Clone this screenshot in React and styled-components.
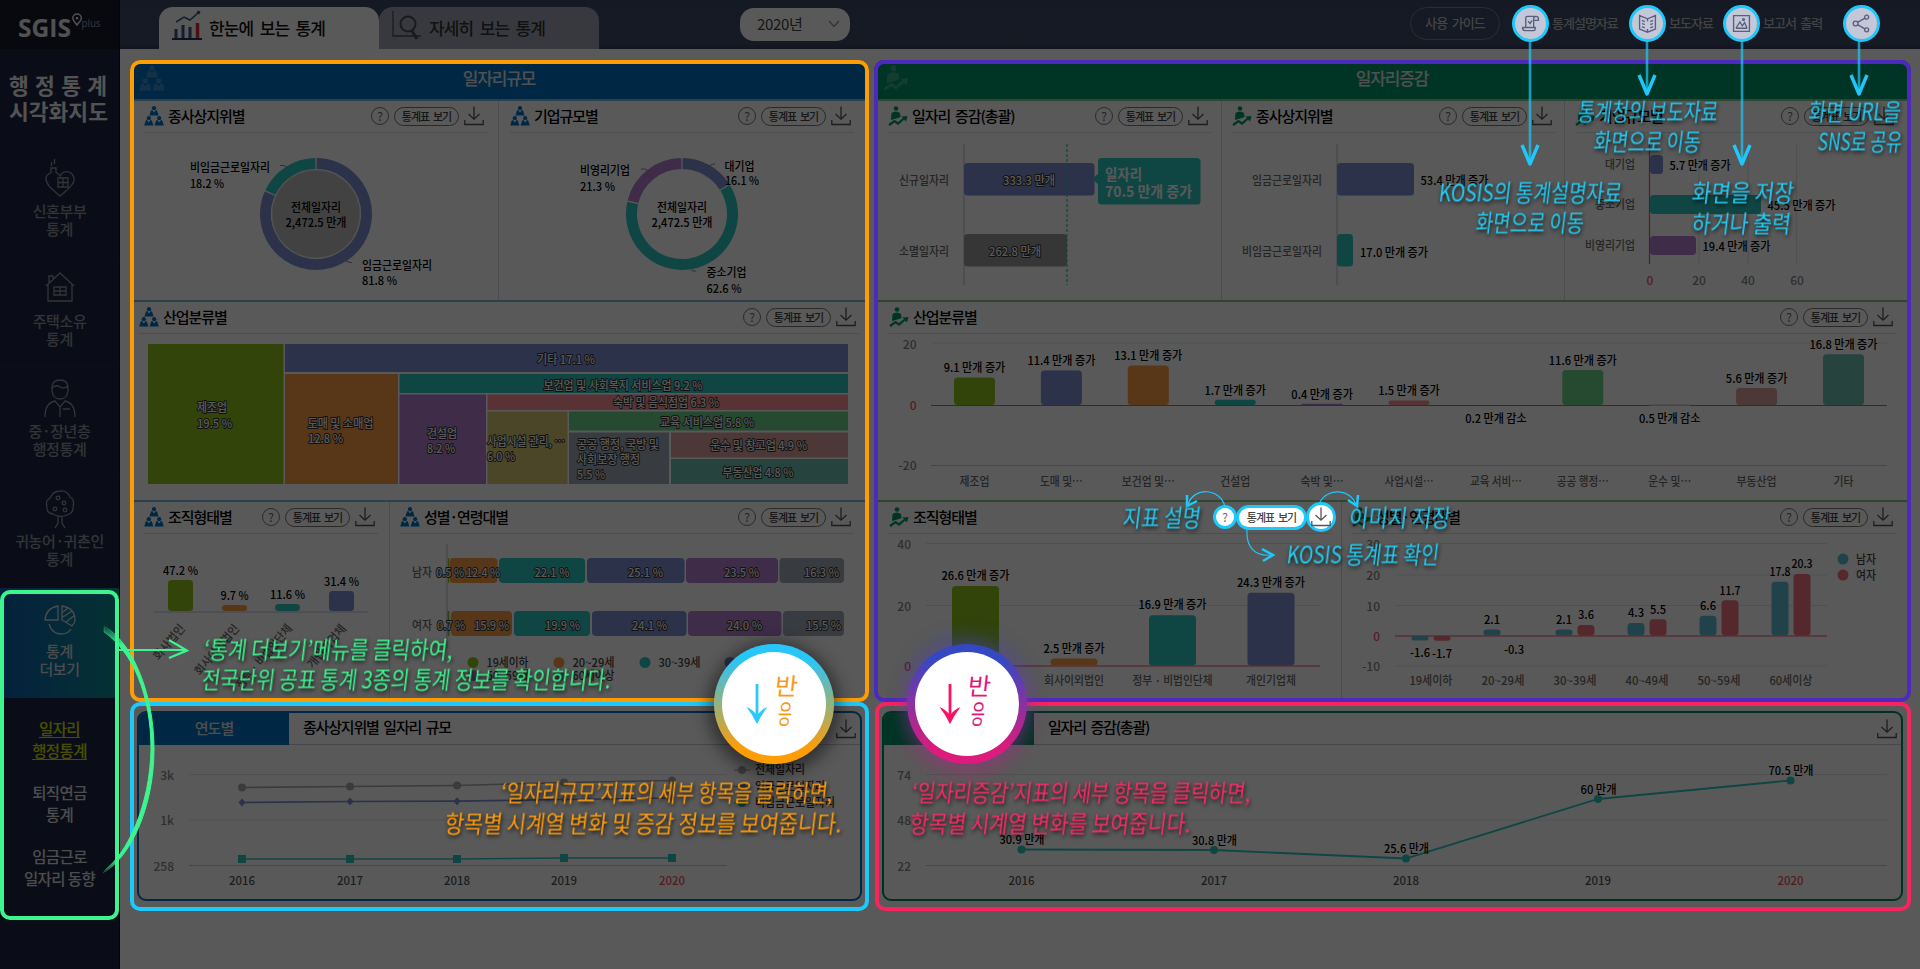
import React from "react";
import styled, { createGlobalStyle, css } from "styled-components";

const FONT = '"Noto Sans CJK KR", "Noto Sans", sans-serif';
const C = {
  lime: "#91c41f", orange: "#f99d45", teal: "#2bc8c2", blue: "#7b8fd3", purple: "#b47ed0",
  pink: "#ff8f9a", khaki: "#dac873", green: "#6dd389", gray: "#a0aab4", brown: "#d9a19b",
  sea: "#6dbfb0", cyanBar: "#63bcd8", redBar: "#f07280", red: "#f05060",
  navy: "#0072c6", forest: "#00986a", grid: "#e4e6f0", axis: "#c4c8dc", label: "#6a6a6a", tick: "#868686",
  cyan: "#1fc8fa",
};

const Global = createGlobalStyle`
  * { box-sizing: border-box; }
  body { margin: 0; font-family: ${FONT}; background: #595959; overflow: hidden; }
  svg { display: block; overflow: visible; }
  svg text { font-family: ${FONT}; }
`;

/* ---------- page frame ---------- */
const Page = styled.div`
  position: relative;
  display: grid;
  grid-template-columns: 120px 1800px;
  width: 1920px;
  height: 969px;
  background: #fff;
  overflow: hidden;
`;
const Dim = styled.div`
  position: absolute;
  inset: 0;
  background: rgba(0, 0, 0, 0.65);
  z-index: 1;
`;
const Sidebar = styled.aside`
  display: flex;
  flex-direction: column;
  background: #1d2742;
  border-right: 1px solid #0b0f1c;
  color: #fff;
  text-align: center;
`;
const LogoBox = styled.div`
  height: 49px;
  padding: 14px 0 0 18px;
  background: #141a2b;
`;
const ServiceName = styled.h1`
  height: 99px;
  margin: 0;
  padding-top: 23px;
  font-size: 21.5px;
  line-height: 26px;
  font-weight: 700;
  color: #eee;
  div { display: flex; justify-content: space-between; padding: 0 12px 0 9px; }
`;
const NavItem = styled.div`
  height: 110px;
  padding-top: 11px;
  font-size: 15px;
  font-weight: 500;
  line-height: 18px;
  letter-spacing: -0.4px;
  white-space: pre-line;
  color: ${(p) => (p.$on ? "#d4dade" : "#8f949e")};
  background: ${(p) => (p.$on ? "linear-gradient(90deg,#0c5fae,#0e8f94)" : "none")};
  border-bottom: ${(p) => (p.$line ? "1px solid #222c48" : "0")};
  svg { margin: 0 auto 3px; stroke: currentColor; fill: none; }
`;
const SubMenu = styled.div`
  flex: 1;
  padding-top: 19px;
`;
const SubItem = styled.div`
  height: 64px;
  font-size: 15.5px;
  font-weight: 500;
  line-height: 22px;
  letter-spacing: -0.6px;
  white-space: pre-line;
  color: ${(p) => (p.$on ? "#d8e000" : "#dcdcdc")};
  text-decoration: ${(p) => (p.$on ? "underline" : "none")};
  text-underline-offset: 2px;
`;
const Main = styled.main`
  display: flex;
  flex-direction: column;
`;

/* ---------- header ---------- */
const Header = styled.header`
  display: flex;
  height: 49px;
  padding-left: 39px;
  background: linear-gradient(#3e4966, #3e4a66 90%, #363f56);
`;
const Tab = styled.div`
  display: flex;
  align-items: center;
  gap: 7px;
  width: 220px;
  height: 42px;
  margin-top: 7px;
  padding: 0 0 2px 13px;
  border-radius: 14px 14px 0 0;
  background: ${(p) => (p.$on ? "#fff" : "#a2a4b4")};
  color: ${(p) => (p.$on ? "#111" : "#333")};
  font-size: 17px;
  font-weight: 500;
  letter-spacing: -0.9px;
  word-spacing: 3.5px;
`;
const Select = styled.div`
  display: flex;
  align-items: center;
  justify-content: space-between;
  width: 110px;
  height: 33px;
  margin: 8px 0 0 141px;
  padding: 0 10px 2px 17px;
  border-radius: 14px;
  background: #fff;
  color: #444;
  font-size: 15px;
  letter-spacing: -0.3px;
`;
const GuideButton = styled.div`
  width: 90px;
  height: 33px;
  margin: 7px 0 0 560px;
  border: 1px solid #77809a;
  border-radius: 17px;
  color: #c0c0c0;
  font-size: 13px;
  font-weight: 500;
  line-height: 30px;
  letter-spacing: -0.9px;
  word-spacing: 2.5px;
  text-align: center;
`;
const RoundIcon = styled.div`
  position: relative;
  z-index: 2;
  width: 37px;
  height: 37px;
  margin: 5px 0 0 ${(p) => p.$gap || 12}px;
  padding: 6px;
  border: 3px solid ${C.cyan};
  border-radius: 50%;
  background: #c3c7d8;
  svg { width: 19px; height: 19px; stroke: #59607c; fill: none; stroke-width: 1.7; }
`;
const HeadLink = styled.div`
  width: ${(p) => p.$w}px;
  margin-left: 3px;
  color: #bdbdbd;
  font-size: 13px;
  font-weight: 500;
  line-height: 45px;
  letter-spacing: -1px;
  word-spacing: 2.5px;
  white-space: nowrap;
`;

/* ---------- boards ---------- */
const Content = styled.div`
  display: grid;
  grid-template-columns: 739px 1037px;
  column-gap: 5px;
  padding: 11px 0 0 10px;
`;
const Column = styled.section`
  display: flex;
  flex-direction: column;
`;
const Board = styled.div`
  border-radius: 10px 10px 0 0;
`;
const BoardTitle = styled.h2`
  display: flex;
  align-items: center;
  height: 41px;
  margin: 0;
  padding: 0 0 4px 9px;
  border-bottom: 2px solid ${(p) => p.$edge};
  border-radius: 10px 10px 0 0;
  background: ${(p) => p.$color};
  color: #e4e4e4;
  font-size: 17px;
  font-weight: 500;
  letter-spacing: -1.1px;
  svg { opacity: 0.22; }
  span { flex: 1; padding-right: 36px; text-align: center; }
`;
const Row = styled.div`
  display: flex;
  height: ${(p) => p.$h}px;
  border-bottom: ${(p) => (p.$edge ? `2px solid ${p.$edge}` : "0")};
`;
const CardBox = styled.article`
  width: ${(p) => p.$w}px;
  flex: none;
  border-right: ${(p) => (p.$divide ? "1px solid #d9dae2" : "0")};
`;
const CardHead = styled.div`
  display: flex;
  align-items: center;
  height: 32px;
  margin: 0 ${(p) => p.$r}px 0 ${(p) => p.$l}px;
  padding: 0 3px 1px 0;
  border-bottom: 1px solid #dcdee6;
`;
const CardTitle = styled.h3`
  flex: 1;
  margin: 0 0 1px 4px;
  color: #000;
  font-size: 15px;
  font-weight: 500;
  letter-spacing: -1.05px;
  word-spacing: 2.5px;
  white-space: nowrap;
`;
const Tools = styled.div`
  display: flex;
  align-items: center;
  gap: 5px;
`;
const lit = css`
  position: relative;
  z-index: 2;
  background: #fff;
  border-color: transparent;
  box-shadow: 0 0 0 3px ${C.cyan};
`;
const HelpButton = styled.div`
  width: 18px;
  height: 18px;
  border: 1px solid #777;
  border-radius: 50%;
  color: #666;
  font-size: 12px;
  line-height: 15px;
  text-align: center;
  ${(p) => p.$lit && lit}
`;
const TableButton = styled.div`
  width: 65px;
  height: 19px;
  border: 1px solid #777;
  border-radius: 10px;
  color: #444;
  font-size: 11px;
  font-weight: 500;
  line-height: 16px;
  letter-spacing: -0.9px;
  word-spacing: 2px;
  text-align: center;
  ${(p) => p.$lit && lit}
`;
const SaveButton = styled.div`
  width: 20px;
  height: 20px;
  border-radius: 50%;
  svg { width: 20px; height: 20px; stroke: #555; fill: none; }
  ${(p) => p.$lit && css`
    ${lit}
    width: 24px;
    height: 24px;
    margin: 0 -5px 0 0;
    padding: 2px;
  `}
`;
const Trend = styled.div`
  height: 190px;
  margin: 9px ${(p) => p.$r}px 0 ${(p) => p.$l}px;
  border: 2px solid ${(p) => p.$color};
  border-radius: 9px;
  overflow: hidden;
`;
const TrendHead = styled.div`
  display: flex;
  align-items: center;
  height: 32px;
  padding-right: 4px;
  border-bottom: 1px solid #c5cbdc;
`;
const TrendTag = styled.div`
  width: 150px;
  height: 32px;
  background: ${(p) => p.$color};
  color: #e0e0e0;
  font-size: 15px;
  font-weight: 500;
  line-height: 29px;
  letter-spacing: -1px;
  text-align: center;
`;
const TrendTitle = styled.div`
  flex: 1;
  padding: 0 0 4px 14px;
  color: #000;
  font-size: 15px;
  font-weight: 500;
  letter-spacing: -1.2px;
  word-spacing: 2.5px;
`;

/* ---------- tutorial layer ---------- */
const Frame = styled.div`
  position: absolute;
  z-index: 3;
  left: ${(p) => p.$x}px;
  top: ${(p) => p.$y}px;
  width: ${(p) => p.$w}px;
  height: ${(p) => p.$h}px;
  border: 4px solid ${(p) => p.$c};
  border-radius: 10px;
`;
const Notes = styled.svg`
  position: absolute;
  inset: 0;
  z-index: 4;
  .note { filter: drop-shadow(1px 2px 2px rgba(0, 0, 0, 0.85)); }
`;
const BadgeBox = styled.div`
  position: absolute;
  z-index: 5;
  left: ${(p) => p.$x}px;
  top: 644px;
  width: 120px;
  height: 120px;
  padding: 8px;
  border-radius: 50%;
  background: linear-gradient(${(p) => p.$from} 12%, ${(p) => p.$to} 88%);
  box-shadow: ${(p) => p.$glow};
`;
const BadgeFace = styled.div`
  height: 104px;
  border-radius: 50%;
  background: #fff;
`;

/* ---------- icons ---------- */
const Logo = () => (
  <svg width="84" height="30" viewBox="0 0 84 30">
    <text x="0" y="22.500" fontSize="25" fontWeight="700" fill="#e8e8e8" textLength="53" lengthAdjust="spacingAndGlyphs" style={{ fontFamily: '"Open Sans", sans-serif' }}>SGIS</text>
    <path d="M59 11 C57 8 54.8 6.500 54.800 4.200 a4.300 4.300 0 0 1 8.600 0 C63.400 6.500 61 8 59 11Z" fill="none" stroke="#e8e8e8" strokeWidth="1.500" />
    <circle cx="59" cy="4.200" r="1.300" fill="#e8e8e8" />
    <text x="63.500" y="13" fontSize="10.500" fill="#9ba3b5" textLength="19" lengthAdjust="spacingAndGlyphs" style={{ fontFamily: '"Open Sans", sans-serif' }}>plus</text>
  </svg>
);
const ChartIcon = () => (
  <svg width="30" height="26" viewBox="0 0 30 26" fill="none">
    <path d="M0 25H30" stroke="#26345f" strokeWidth="2" />
    <path d="M4 24V15M11 24V11M18 24V13" stroke="#3a5090" strokeWidth="3" />
    <path d="M25.500 24V9" stroke="#dd2b3a" strokeWidth="3.500" />
    <path d="M4 8L12 3L18 6L26 -1" stroke="#3a5090" strokeWidth="1.500" />
    <circle cx="26.500" cy="-1.500" r="1.800" fill="#3a5090" />
  </svg>
);
const SearchChartIcon = () => (
  <svg width="30" height="26" viewBox="0 0 30 26" fill="none" stroke="#4a4c55">
    <path d="M1 -3V22H29" strokeWidth="1.300" />
    <circle cx="16" cy="10" r="7.500" strokeWidth="2" />
    <path d="M20 17L25 25" strokeWidth="3" />
  </svg>
);
const Figure = ({ x, y }) => (
  <g transform={`translate(${x} ${y})`}>
    <circle cx="0" cy="-2.800" r="2.100" />
    <path d="M-4.600 4.600L-3.200 0Q-2.800 -0.900 -1.800 -0.900L0 1.600L1.800 -0.900Q2.800 -0.900 3.200 0L4.600 4.600Z" />
  </g>
);
const PeopleIcon = ({ size = 20, fill = C.navy }) => (
  <svg width={size} height={size} viewBox="0 0 20 20" fill={fill}>
    <Figure x={10} y={5} />
    <Figure x={4.800} y={15} />
    <Figure x={15.200} y={15} />
  </svg>
);
const GrowthIcon = ({ size = 20, fill = C.forest }) => (
  <svg width={size} height={size} viewBox="0 0 20 20" fill={fill}>
    <circle cx="8" cy="2.500" r="2.300" />
    <path d="M3.500 7Q8 4 12 7L12.500 11L10 12L3 14Z" />
    <path d="M1 19L6.500 15L10 17.500L16.500 12" fill="none" stroke={fill} strokeWidth="2.200" />
    <path d="M13.500 10.500L19.500 10L18 15.500Z" />
  </svg>
);
const DownloadIcon = () => (
  <svg viewBox="0 0 20 20" strokeWidth="1.300">
    <path d="M10 0.500V13M4.500 8L10 13.200L15.500 8M0.800 14V18.500H19.200V14" />
  </svg>
);
const NavIcons = {
  heart: <path d="M16 37C9 31 2 26 2 19.500C2 17 4 15 7 13.500V9H12V13.500C13 14 15 15 16 17C18 13 22 12 25 13C30 15 32 21 28 25.500C25 30 20 33.500 16 37ZM7.500 7V3M10.500 5V0M14 19H24V28H14ZM19 19V28M14 23.500H24" />,
  house: <path d="M2 17L16 4L30 17M4 15.500V32H28V15.500M5 14V7H9V11M10 18H22V26H10ZM16 18V26M10 22H22" />,
  man: <path d="M8 9Q8 1 16 1Q24 1 24 9V12Q23 20 16 20Q9 20 8 12ZM8 9Q12 5 16 8Q21 10 24 7M1 38Q1 24 11 22L16 28L21 22Q31 24 31 38M16 28V38M19 30H26" />,
  tree: <g><path d="M9 25Q2 24 3 17Q1 12 6 9Q9 2 16 2Q23 1 26 8Q31 11 29 17Q30 24 23 26Q16 29 9 25ZM14 27V34L11 39M18 27V34L21 39" /><circle cx="14" cy="9" r="1.800" /><circle cx="20" cy="14" r="1.800" /><circle cx="11" cy="20" r="1.800" /><circle cx="21" cy="21" r="1.800" /></g>,
  pie: <path transform="translate(0 6)" d="M14 15H1Q2 3 14 1ZM18 1Q31 3 31 15Q31 18 28 21L18 15ZM19 7L24 3M19 12L28 6M22 17L31 10M5 19Q8 29 17 29Q24 29 27 24" />,
};
const NavSvg = ({ name }) => (
  <svg width="32" height="40" viewBox="0 0 32 40" strokeWidth="1.300">{NavIcons[name]}</svg>
);

/* ---------- chart parts ---------- */
const T = ({ x, y, w, a = "start", s = 12, fill = "#000", out, children, rot, weight = 500, ...rest }) => (
  <text
    x={x} y={y + s * 0.36} fontSize={s} fill={fill} textAnchor={a} fontWeight={weight}
    textLength={w} lengthAdjust="spacingAndGlyphs"
    transform={rot ? `rotate(${rot} ${x} ${y})` : undefined}
    stroke={out ? "#333" : undefined} strokeWidth={out ? 2 : undefined} paintOrder="stroke" strokeLinejoin="round"
    {...rest}
  >{children}</text>
);
const White = (p) => <T fill="#fff" out {...p} />;
const Bar = ({ x, y, w, h, c, r = 3.500 }) => <rect x={x} y={y} width={w} height={h} rx={Math.min(r, h / 2)} fill={c} />;
const HLine = ({ x1, x2, y, c = C.grid }) => <line x1={x1} x2={x2} y1={y} y2={y} stroke={c} strokeWidth="1.200" />;
const VLine = ({ x, y1, y2, c = C.axis, ...r }) => <line x1={x} x2={x} y1={y1} y2={y2} stroke={c} strokeWidth="1.200" {...r} />;
const Plot = ({ x, y, w, h, children }) => (
  <svg width={w} height={h} viewBox={`${x} ${y} ${w} ${h}`}>{children}</svg>
);
function arc(cx, cy, r, from, to) {
  const p = (t) => [cx + r * Math.sin(t * 2 * Math.PI), cy - r * Math.cos(t * 2 * Math.PI)];
  const [x1, y1] = p(from);
  const [x2, y2] = p(to);
  return `M${x1} ${y1}A${r} ${r} 0 ${to - from > 0.5 ? 1 : 0} 1 ${x2} ${y2}`;
}
function Donut({ cx, cy, parts, filled }) {
  let at = 0;
  return (
    <g>
      {filled && <circle cx={cx} cy={cy} r="44" fill="#bdbdbd" stroke="#ddd" />}
      {parts.map(([v, c]) => {
        const d = arc(cx, cy, 50.5, at + 0.002, at + v / 100 - 0.002);
        at += v / 100;
        return <path key={c} d={d} fill="none" stroke={c} strokeWidth="11" />;
      })}
      <T x={cx} y={cy - 6} w={50} a="middle">전체일자리</T>
      <T x={cx} y={cy + 9} w={61} a="middle">2,472.5 만개</T>
    </g>
  );
}

/* ---------- cards ---------- */
function Card({ w, l, r, title, green, divide, lit: on, children }) {
  return (
    <CardBox $w={w} $divide={divide}>
      <CardHead $l={l} $r={r}>
        {green ? <GrowthIcon /> : <PeopleIcon />}
        <CardTitle>{title}</CardTitle>
        <Tools>
          <HelpButton $lit={on}>?</HelpButton>
          <TableButton $lit={on}>통계표 보기</TableButton>
          <SaveButton $lit={on}><DownloadIcon /></SaveButton>
        </Tools>
      </CardHead>
      {children}
    </CardBox>
  );
}

const tree = [
  [148, 344, 135.5, 140, C.lime, [["제조업", 197, 408, 30], ["19.5 %", 197, 423.500, 35]]],
  [285, 344, 563, 28, C.blue, [["기타 17.1 %", 537, 360, 58]]],
  [285, 374, 113, 110, C.orange, [["도매 및 소매업", 307.500, 424, 66], ["12.8 %", 308, 438.500, 35]]],
  [399.500, 374, 448.500, 19, C.teal, [["보건업 및 사회복지 서비스업 9.2 %", 543.500, 385.500, 159]]],
  [399.500, 394.500, 86.500, 89.500, C.purple, [["건설업", 427, 433.500, 30], ["8.2 %", 427, 448.500, 28]]],
  [487.500, 394.500, 360.500, 15.500, C.pink, [["숙박 및 음식점업 6.3 %", 613, 403, 106]]],
  [487.500, 411.500, 80, 72.500, C.khaki, [["사업시설 관리, …", 487, 442, 78], ["6.0 %", 487, 456.500, 28]]],
  [569, 411.500, 279, 19, C.green, [["교육 서비스업 5.8 %", 660, 422.500, 94]]],
  [569, 432.500, 100, 51.500, C.gray, [["공공 행정, 국방 및", 577, 445, 82], ["사회보장 행정", 577, 459.500, 63], ["5.5 %", 577, 475, 28]]],
  [671, 432.500, 177, 25, C.brown, [["운수 및 창고업 4.9 %", 710, 446, 97]]],
  [671, 459, 177, 25, C.sea, [["부동산업 4.8 %", 722.500, 472.500, 71]]],
];
const stacked = [
  { y: 558, name: "남자", segs: [[448, 449, C.lime, "0.5 %", 436, 28], [449.500, 497.500, C.orange, "12.4 %", 466, 34], [499, 585, C.teal, "22.1 %", 534.500, 35], [587, 684.500, C.blue, "25.1 %", 628, 35], [686, 778, C.purple, "23.5 %", 724, 35], [779.500, 844, C.gray, "16.3 %", 804, 35]] },
  { y: 611, name: "여자", segs: [[447.500, 449.500, C.lime, "0.7 %", 437, 28], [451, 512, C.orange, "15.9 %", 474, 35], [514, 590, C.teal, "19.9 %", 545, 35], [592, 686.500, C.blue, "24.1 %", 632, 35], [688, 781.500, C.purple, "24.0 %", 727, 35], [783, 844, C.gray, "15.5 %", 806, 35]] },
];
const orgShare = [
  [180.500, 580, C.lime, "47.2 %", "회사법인", 42],
  [234.500, 605, C.orange, "9.7 %", "회사이외법인", 62],
  [287.500, 604, C.teal, "11.6 %", "정부 · 비법인단체", 80],
  [341.500, 591, C.blue, "31.4 %", "개인기업체", 53],
];
const industry = [
  ["제조업", 9.1, C.lime, 30], ["도매 및…", 11.4, C.blue, 43], ["보건업 및…", 13.1, C.orange, 53], ["건설업", 1.7, C.teal, 30],
  ["숙박 및…", 0.4, C.purple, 43], ["사업시설…", 1.5, C.pink, 49], ["교육 서비…", -0.2, null, 52], ["공공 행정…", 11.6, C.green, 52],
  ["운수 및…", -0.5, C.gray, 43], ["부동산업", 5.6, C.brown, 40], ["기타", 16.8, C.sea, 20],
];
const orgChange = [["회사법인", 26.6, C.lime, 40], ["회사이외법인", 2.5, C.orange, 60], ["정부 · 비법인단체", 16.9, C.teal, 80], ["개인기업체", 24.3, C.blue, 50]];
const ages = [["19세이하", -1.6, -1.7], ["20~29세", 2.1, -0.3], ["30~39세", 2.1, 3.6], ["40~49세", 4.3, 5.5], ["50~59세", 6.6, 11.7], ["60세이상", 17.8, 20.3]];
const years = ["2016", "2017", "2018", "2019", "2020"];

function LeftBoard() {
  return (
    <Board>
      <BoardTitle $color="#0072c6" $edge="#7fb9e0"><PeopleIcon size={26} fill="#fff" /><span>일자리규모</span></BoardTitle>
      <Row $h={201} $edge="#7fb9e0">
        <Card w={369} l={14} r={11} title="종사상지위별" divide>
          <Plot x={130} y={133} w={368} h={166}>
            <Donut cx={316} cy={214} filled parts={[[81.8, C.blue], [18.2, C.teal]]} />
            <path d="M280 165.500H284L288 168M346 261L350 262.500H352" fill="none" stroke="#888" />
            <T x={190} y={168} w={80}>비임금근로일자리</T><T x={190} y={183.500} w={34}>18.2 %</T>
            <T x={362} y={265.500} w={70}>임금근로일자리</T><T x={362} y={281} w={35}>81.8 %</T>
          </Plot>
        </Card>
        <Card w={370} l={11} r={15} title="기업규모별">
          <Plot x={499} y={133} w={370} h={166}>
            <Donut cx={682} cy={214} parts={[[16.1, C.blue], [62.6, C.teal], [21.3, C.purple]]} />
            <path d="M641 169H645L650 172M709 166L713 164H715M691 270L693 271H696" fill="none" stroke="#888" />
            <T x={580} y={170.500} w={50}>비영리기업</T><T x={580} y={186.500} w={35}>21.3 %</T>
            <T x={724.500} y={166.500} w={30}>대기업</T><T x={725} y={181} w={34}>16.1 %</T>
            <T x={706.500} y={273} w={40}>중소기업</T><T x={706.500} y={288.500} w={35}>62.6 %</T>
          </Plot>
        </Card>
      </Row>
      <Row $h={200} $edge="#7fb9e0">
        <Card w={739} l={9} r={10} title="산업분류별">
          <Plot x={130} y={334} w={739} h={166}>
            {tree.map(([x, y, w, h, c, lines]) => (
              <g key={c}>
                <rect x={x} y={y} width={w} height={h} fill={c} />
                {lines.map(([t, tx, ty, tw]) => <White key={t} x={tx} y={ty} w={tw}>{t}</White>)}
              </g>
            ))}
          </Plot>
        </Card>
      </Row>
      <Row $h={200}>
        <Card w={260} l={14} r={11} title="조직형태별" divide>
          <Plot x={130} y={534} w={259} h={168}>
            <HLine x1={154} x2={368} y={612} c={C.axis} />
            {orgShare.map(([cx, top, c, v, name, w]) => (
              <g key={name}>
                <Bar x={cx - 12.500} y={top} w={25} h={611 - top} c={c} />
                <T x={cx} y={top - 9.500} w={v.length > 5 ? 35 : 28} a="middle">{v}</T>
                <T x={cx + 2} y={626} w={w} a="end" rot={-50} fill={C.label}>{name}</T>
              </g>
            ))}
          </Plot>
        </Card>
        <Card w={479} l={10} r={15} title="성별·연령대별">
          <Plot x={390} y={534} w={479} h={168}>
            <VLine x={447} y1={544} y2={649} />
            {stacked.map((row) => (
              <g key={row.name}>
                <T x={412} y={row.y + 15} w={20} fill={C.label}>{row.name}</T>
                {row.segs.map(([a, b, c]) => <Bar key={c} x={a} y={row.y} w={b - a} h={25} c={c} r={b - a < 4 ? 0 : 4} />)}
                {row.segs.map(([, , c, t, tx, tw]) => <White key={c} x={tx} y={row.y + 15} w={tw}>{t}</White>)}
              </g>
            ))}
            {[[473, 662.500, C.lime, "19세이하"], [559, 662.500, C.orange, "20~29세"], [645, 662.500, C.teal, "30~39세"], [730, 662.500, C.blue, "40~49세"], [473, 675.500, C.purple, "50~59세"], [559, 675.500, C.gray, "60세이상"]].map(([x, y, c, t]) => (
              <g key={t}><circle cx={x} cy={y} r="5.500" fill={c} /><T x={x + 13.500} y={y} w={42} fill="#444">{t}</T></g>
            ))}
          </Plot>
        </Card>
      </Row>
    </Board>
  );
}

const edgeG = "#86c98f";
function RightBoard() {
  return (
    <Board>
      <BoardTitle $color={C.forest} $edge={edgeG}><GrowthIcon size={26} fill="#fff" /><span>일자리증감</span></BoardTitle>
      <Row $h={201} $edge={edgeG}>
        <Card w={348} l={14} r={10} title="일자리 증감(총괄)" green divide>
          <Plot x={874} y={133} w={347} h={166}>
            <VLine x={964} y1={144} y2={285} />
            <Bar x={964} y={163} w={130.500} h={32.500} c={C.blue} />
            <Bar x={964} y={234} w={103} h={32.500} c="#9a9a9a" />
            <VLine x={1067} y1={144} y2={285} c="#2bc0a8" strokeDasharray="3 2" />
            <path d="M1092 179L1099 173V185Z" fill={C.teal} />
            <Bar x={1098} y={158} w={102.500} h={46.500} c={C.teal} />
            <White x={1003} y={181} w={52}>333.3 만개</White>
            <White x={989} y={252} w={52}>262.8 만개</White>
            <T x={899} y={180.500} w={50} fill={C.label}>신규일자리</T>
            <T x={899} y={251.500} w={50} fill={C.label}>소멸일자리</T>
            <T x={1105} y={174.500} w={37} s={14.5} fill="#fff" weight={700}>일자리</T>
            <T x={1105} y={192} w={87} s={14.5} fill="#fff" weight={700}>70.5 만개 증가</T>
          </Plot>
        </Card>
        <Card w={343} l={10} r={9} title="종사상지위별" green divide>
          <Plot x={1222} y={133} w={342} h={166}>
            <VLine x={1337} y1={144} y2={285} />
            <Bar x={1337} y={163} w={77} h={32.500} c={C.blue} />
            <Bar x={1337} y={234} w={16} h={32.500} c={C.teal} />
            <T x={1252} y={180.500} w={70} fill={C.label}>임금근로일자리</T>
            <T x={1242} y={251.500} w={80} fill={C.label}>비임금근로일자리</T>
            <T x={1420.500} y={181} w={68}>53.4 만개 증가</T>
            <T x={1360} y={252.500} w={68}>17.0 만개 증가</T>
          </Plot>
        </Card>
        <Card w={346} l={10} r={14} title="기업규모별" green>
          <Plot x={1565} y={133} w={346} h={166}>
            {[1699, 1748, 1796.500].map((x) => <VLine key={x} x={x} y1={144} y2={264} c={C.grid} />)}
            <VLine x={1649.500} y1={144} y2={264} c={C.red} />
            {[[155, 13, C.blue, "5.7 만개 증가", 61, "대기업", 30], [195, 111, C.teal, "45.5 만개 증가", 68, "중소기업", 40], [236, 46, C.purple, "19.4 만개 증가", 68, "비영리기업", 50]].map(([y, w, c, v, vw, n, nw]) => (
              <g key={n}>
                <Bar x={1650} y={y} w={w} h={19} c={c} />
                <T x={1656.500 + w} y={y + 11} w={vw}>{v}</T>
                <T x={1635} y={y + 10} w={nw} a="end" fill={C.label}>{n}</T>
              </g>
            ))}
            {["0", "20", "40", "60"].map((t, i) => <T key={t} x={1650 + i * 49} y={280.500} a="middle" fill={i ? C.tick : C.red}>{t}</T>)}
          </Plot>
        </Card>
      </Row>
      <Row $h={200} $edge={edgeG}>
        <Card w={1037} l={15} r={15} title="산업분류별" green>
          <Plot x={874} y={334} w={1037} h={166}>
            <HLine x1={931} x2={1887} y={343} /><HLine x1={931} x2={1887} y={465.500} c={C.axis} />
            <HLine x1={931} x2={1887} y={405.500} c={C.red} />
            <T x={916.500} y={344.500} a="end" fill={C.tick}>20</T>
            <T x={916.500} y={406} a="end" fill={C.red}>0</T>
            <T x={916.500} y={466} a="end" fill={C.tick}>-20</T>
            {industry.map(([n, v, c, w], i) => {
              const cx = 974.500 + i * 86.900;
              const h = Math.max(1.200, Math.abs(v) * 3.020);
              const text = `${Math.abs(v).toFixed(1)} 만개 ${v > 0 ? "증가" : "감소"}`;
              return (
                <g key={n}>
                  {c && v > 0 && <Bar x={cx - 20.500} y={405 - h} w={41} h={h} c={c} />}
                  {c && v < 0 && <rect x={cx - 20.500} y={404.500} width={41} height={1.500} fill="#d8bcc2" />}
                  <T x={cx} y={v > 0 ? 395.500 - h : 419} w={Math.abs(v) >= 10 ? 68 : 61.500} a="middle">{text}</T>
                  <T x={cx} y={481.500} w={w} a="middle" fill={C.label}>{n}</T>
                </g>
              );
            })}
          </Plot>
        </Card>
      </Row>
      <Row $h={200}>
        <Card w={468} l={15} r={10} title="조직형태별" green divide lit>
          <Plot x={874} y={534} w={467} h={168}>
            <HLine x1={926} x2={1320} y={543.500} /><HLine x1={926} x2={1320} y={605.500} />
            <HLine x1={926} x2={1320} y={666} c={C.red} />
            <T x={911} y={545} a="end" fill={C.tick}>40</T>
            <T x={911} y={606.500} a="end" fill={C.tick}>20</T>
            <T x={911} y={666.500} a="end" fill={C.red}>0</T>
            {orgChange.map(([n, v, c, w], i) => {
              const cx = 975.500 + i * 98.500;
              const h = v * 3.010 - 0.500;
              return (
                <g key={n}>
                  <Bar x={cx - 23.500} y={665.500 - h} w={47} h={h} c={c} />
                  <T x={cx} y={655.500 - h} w={v >= 10 ? 68 : 61} a="middle">{`${v} 만개 증가`}</T>
                  <T x={cx} y={681} w={w} a="middle" fill={C.label}>{n}</T>
                </g>
              );
            })}
          </Plot>
        </Card>
        <Card w={569} l={10} r={15} title="성별·연령대별" green>
          <Plot x={1342} y={534} w={569} h={168}>
            {[[543.500, "30"], [575, "20"], [605.500, "10"], [636, "0"], [666, "-10"]].map(([y, t]) => (
              <g key={t}>
                <HLine x1={1395} x2={1827} y={y} c={t === "0" ? C.red : C.grid} />
                <T x={1380} y={y + 1} a="end" fill={t === "0" ? C.red : C.tick}>{t}</T>
              </g>
            ))}
            {ages.map(([n, m, f], i) => {
              const cx = 1431 + i * 72;
              return (
                <g key={n}>
                  {[[m, -11, C.cyanBar], [f, 11, C.redBar]].map(([v, dx, c]) => {
                    const h = Math.max(1, Math.abs(v) * 3.050 - 0.500);
                    const y = v > 0 ? 635.500 - h : 636;
                    return (
                      <g key={c}>
                        <Bar x={cx + dx - 8.500} y={y} w={17} h={h} c={v === -0.3 ? "#ccb0b4" : c} />
                        <T x={cx + dx} y={v > 0 ? y - 10 : y + h + 12.500} a="middle" w={Math.abs(v) >= 10 ? 21 : v < 0 ? 20 : 16}>{v}</T>
                      </g>
                    );
                  })}
                  <T x={cx} y={681} w={43} a="middle" fill={C.label}>{n}</T>
                </g>
              );
            })}
            <circle cx="1843" cy="559" r="5.500" fill={C.cyanBar} /><T x={1856} y={560} w={20} fill="#444">남자</T>
            <circle cx="1843" cy="575" r="5.500" fill={C.redBar} /><T x={1856} y={576} w={20} fill="#444">여자</T>
          </Plot>
        </Card>
      </Row>
    </Board>
  );
}

const lx = [242, 350, 457, 564, 672];
const rx = [1021.500, 1214, 1406, 1598, 1790.500];
const pts = (xs, ys) => xs.map((x, i) => `${x},${ys[i]}`).join(" ");
const Years = ({ xs }) => years.map((t, i) => <T key={t} x={xs[i]} y={881} w={26} a="middle" fill={i === 4 ? C.red : "#555"}>{t}</T>);

function LeftTrend() {
  const g = [787.500, 786.500, 785.500, 782.500, 780.500];
  const b = [802.500, 801.500, 801.200, 799.500, 798];
  const t = [859, 859, 859, 858, 858];
  return (
    <Trend $color="#0072c6" $l={7} $r={7}>
      <TrendHead><TrendTag $color="#0072c6">연도별</TrendTag><TrendTitle>종사상지위별 일자리 규모</TrendTitle><SaveButton><DownloadIcon /></SaveButton></TrendHead>
      <Plot x={139} y={745} w={721} h={154}>
        {[[774.500, "3k"], [820, "1k"], [865.500, "258"]].map(([y, n], i) => <g key={n}><HLine x1={189} x2={727} y={y} c={i === 2 ? C.axis : C.grid} /><T x={174} y={y + 1} a="end" fill={C.tick}>{n}</T></g>)}
        <g fill="none" strokeWidth="1.700">
          <polyline points={pts(lx, g)} stroke="#aaa" /><polyline points={pts(lx, b)} stroke={C.blue} /><polyline points={pts(lx, t)} stroke={C.teal} />
        </g>
        {lx.map((x, i) => (
          <g key={x}>
            <circle cx={x} cy={g[i]} r="4" fill="#aaa" />
            <path d={`M${x} ${b[i] - 4}l3.500 4l-3.500 4l-3.500 -4Z`} fill={C.blue} />
            <rect x={x - 4} y={t[i] - 4} width="8" height="8" fill={C.teal} />
          </g>
        ))}
        <Years xs={lx} />
        {[[770, "#aaa", "전체일자리", 50], [786.500, C.blue, "임금근로일자리", 70], [803, C.teal, "비임금근로일자리", 80]].map(([y, c, n, w]) => (
          <g key={n}><HLine x1={734} x2={750} y={y} c={c} /><circle cx="742" cy={y} r="4" fill={c} /><T x={755} y={y} w={w} fill="#333">{n}</T></g>
        ))}
      </Plot>
    </Trend>
  );
}
function RightTrend() {
  const ys = [849.500, 850, 858.500, 799, 780.500];
  return (
    <Trend $color="#008a61" $l={8} $r={8}>
      <TrendHead><TrendTag $color={C.forest}>연도별</TrendTag><TrendTitle>일자리 증감(총괄)</TrendTitle><SaveButton><DownloadIcon /></SaveButton></TrendHead>
      <Plot x={884} y={745} w={1017} h={154}>
        {[[774.500, "74"], [820, "48"], [865.500, "22"]].map(([y, n], i) => <g key={n}><HLine x1={926} x2={1887} y={y} c={i === 2 ? C.axis : C.grid} /><T x={911} y={y + 1} a="end" fill={C.tick}>{n}</T></g>)}
        <polyline points={pts(rx, ys)} fill="none" stroke={C.teal} strokeWidth="1.800" />
        {rx.map((x, i) => <circle key={x} cx={x} cy={ys[i]} r="4" fill={C.teal} />)}
        {["30.9", "30.8", "25.6", "60", "70.5"].map((v, i) => <T key={v} x={rx[i] + 0.500} y={ys[i] - 9.500} w={i === 3 ? 36 : 45} a="middle">{`${v} 만개`}</T>)}
        <Years xs={rx} />
      </Plot>
    </Trend>
  );
}

/* ---------- tutorial drawing ---------- */
const Note = ({ x, y, w, c = "#22cdf5", s = 23.5, children }) => (
  <g className="note" transform={`translate(${x} ${y + s * 0.36}) skewX(-7)`}>
    <text fontSize={s} fontWeight="400" fill={c} textLength={w} lengthAdjust="spacingAndGlyphs">{children}</text>
  </g>
);
const Down = ({ x, to }) => (
  <g fill="none" stroke={C.cyan}>
    <path d={`M${x} 41V${to - 4}`} strokeWidth="2.600" opacity="0.7" />
    <path d={`M${x - 8} ${to - 21}L${x} ${to - 2}L${x + 8} ${to - 21}`} strokeWidth="3.400" strokeLinejoin="round" />
  </g>
);
function Annotations() {
  const g = "#3df58f", o = "#ff9d0a", p = "#fb2b68";
  return (
    <Notes width="1920" height="969" viewBox="0 0 1920 969">
      <defs>
        <linearGradient id="fade" x1="0" y1="0" x2="0" y2="1">
          <stop offset="0" stopColor={g} stopOpacity="0.1" /><stop offset="0.08" stopColor={g} />
          <stop offset="0.94" stopColor={g} /><stop offset="1" stopColor={g} stopOpacity="0.1" />
        </linearGradient>
      </defs>
      <Down x={1530} to={166} /><Down x={1647} to={96} /><Down x={1742} to={166} /><Down x={1859} to={96} />
      <g fill="none" stroke={C.cyan} strokeWidth="1.200">
        <path d="M1225 507C1221 488 1193 486 1188 505" /><path d="M1320 502C1327 488 1351 488 1356 505" /><path d="M1247 530C1246 547 1255 557 1272 555" />
        <path strokeWidth="2.500" d="M1187 495V506L1197 501M1348 500L1357 506L1358 495M1262 549L1273 555L1263 561" />
      </g>
      <Note x={1438} y={193} w={183}>KOSIS의 통계설명자료</Note><Note x={1475} y={223} w={108}>화면으로 이동</Note>
      <Note x={1577} y={112} w={140}>통계청의 보도자료</Note><Note x={1593} y={142} w={107}>화면으로 이동</Note>
      <Note x={1691} y={193} w={102}>화면을 저장</Note><Note x={1691} y={224} w={99}>하거나 출력</Note>
      <Note x={1808} y={112} w={92}>화면 URL을</Note><Note x={1817} y={142} w={84}>SNS로 공유</Note>
      <Note x={1122} y={518} w={78}>지표 설명</Note><Note x={1348} y={518} w={102}>이미지 저장</Note><Note x={1286} y={555} w={152}>KOSIS 통계표 확인</Note>
      <path d="M104 626C130 640 154 690 154 749C154 808 130 858 103 873L106 869C127 853 150 806 151 749C151 695 133 652 104 632Z" fill="url(#fade)" stroke="url(#fade)" strokeWidth="1" />
      <path d="M119 650H186M169 640L187 650.500L169 658" fill="none" stroke={g} strokeWidth="2.200" />
      <Note x={203} y={650} w={249} c={g}>‘통계 더보기’메뉴를 클릭하여,</Note>
      <Note x={201} y={680} w={409} c={g}>전국단위 공표 통계 3종의 통계 정보를 확인합니다.</Note>
      <Note x={500} y={793} w={332} c={o}>‘일자리규모’지표의 세부 항목을 클릭하면,</Note>
      <Note x={444} y={824} w={397} c={o}>항목별 시계열 변화 및 증감 정보를 보여줍니다.</Note>
      <Note x={911} y={793} w={339} c={p}>‘일자리증감’지표의 세부 항목을 클릭하면,</Note>
      <Note x={909} y={824} w={281} c={p}>항목별 시계열 변화를 보여줍니다.</Note>
    </Notes>
  );
}
function Badge({ x, id, from, to, glow, arrow, t1, t2 }) {
  return (
    <BadgeBox $x={x} $from={from} $to={to} $glow={glow}>
      <BadgeFace>
        <svg width="104" height="104" viewBox="0 0 104 104">
          <defs><linearGradient id={id} gradientUnits="userSpaceOnUse" x1="0" y1="24" x2="0" y2="76"><stop offset="0.2" stopColor={t1} /><stop offset="0.85" stopColor={t2} /></linearGradient></defs>
          <path d="M35 32V66" stroke={arrow} strokeWidth="2.800" />
          <path d="M24.500 55Q30 57 35 63Q40 57 45.500 55Q40 62 35 72Q30 62 24.500 55Z" fill={arrow} />
          <g fill={`url(#${id})`} fontSize="24">
            <text transform="translate(52 43) skewX(-6)" textLength="23" lengthAdjust="spacingAndGlyphs">반</text>
            <text transform="translate(55 72) skewX(-6)" fontSize="27" textLength="14" lengthAdjust="spacingAndGlyphs">응</text>
          </g>
        </svg>
      </BadgeFace>
    </BadgeBox>
  );
}

export default function App() {
  return (
    <Page>
      <Global />
      <Sidebar>
        <LogoBox><Logo /></LogoBox>
        <ServiceName>
          <div><span>행</span><span>정</span><span>통</span><span>계</span></div>
          <div><span>시</span><span>각</span><span>화</span><span>지</span><span>도</span></div>
        </ServiceName>
        <NavItem $line><NavSvg name="heart" />{"신혼부부\n통계"}</NavItem>
        <NavItem $line><NavSvg name="house" />{"주택소유\n통계"}</NavItem>
        <NavItem $line><NavSvg name="man" />{"중·장년층\n행정통계"}</NavItem>
        <NavItem><NavSvg name="tree" />{"귀농어·귀촌인\n통계"}</NavItem>
        <NavItem $on><NavSvg name="pie" />{"통계\n더보기"}</NavItem>
        <SubMenu>
          <SubItem $on>{"일자리\n행정통계"}</SubItem>
          <SubItem>{"퇴직연금\n통계"}</SubItem>
          <SubItem>{"임금근로\n일자리 동향"}</SubItem>
        </SubMenu>
      </Sidebar>
      <Main>
        <Header>
          <Tab $on><ChartIcon />한눈에 보는 통계</Tab>
          <Tab><SearchChartIcon />자세히 보는 통계</Tab>
          <Select>2020년<svg width="12" height="8" viewBox="0 0 12 8" fill="none" stroke="#999" strokeWidth="1.500"><path d="M1 1L6 6.500L11 1" /></svg></Select>
          <GuideButton>사용 가이드</GuideButton>
          <RoundIcon><svg viewBox="0 0 24 24"><path d="M6 17V5Q6 3 8 3H19M16 17V6Q16 3 19 3Q22 3 22 6V8H16M6 17H2Q2 21 5 21H16Q18 21 18 18V17H6M9 9L11.500 12L14 8" /></svg></RoundIcon>
          <HeadLink $w={66}>통계설명자료</HeadLink>
          <RoundIcon $gap={11}><svg viewBox="0 0 24 24"><path d="M12 6L2 2V19L12 23L22 19V2ZM12 6V9M5 8L8.500 9.500M5 12L8.500 13.500M5 16L8.500 17.500M19 8L15.500 9.500M19 12L15.500 13.500M19 16L15.500 17.500M12 19V23" /></svg></RoundIcon>
          <HeadLink $w={43}>보도자료</HeadLink>
          <RoundIcon $gap={11}><svg viewBox="0 0 24 24"><path d="M2 2H22V22H2ZM5 18L10 10L13 15L16 11L19 18M5 18H19" /><circle cx="14.500" cy="7" r="1.200" /></svg></RoundIcon>
          <HeadLink $w={58}>보고서 출력</HeadLink>
          <RoundIcon $gap={22}><svg viewBox="0 0 24 24"><circle cx="4.500" cy="12" r="3" /><circle cx="18.500" cy="4" r="2.500" /><circle cx="18.500" cy="20" r="2.500" /><path d="M7 10.500L16.300 5.300M7 13.500L16.300 18.700" /></svg></RoundIcon>
        </Header>
        <Content>
          <Column><LeftBoard /><LeftTrend /></Column>
          <Column><RightBoard /><RightTrend /></Column>
        </Content>
      </Main>
      <Dim />
      <Frame $x={130} $y={60} $w={739} $h={642} $c="#ff9d00" />
      <Frame $x={874} $y={60} $w={1037} $h={642} $c="#4e29c0" />
      <Frame $x={130} $y={702} $w={739} $h={209} $c={C.cyan} />
      <Frame $x={875} $y={702} $w={1036} $h={209} $c="#f8245f" />
      <Frame $x={0} $y={590} $w={119} $h={330} $c="#3df58f" />
      <Annotations />
      <Badge x={714} id="reactA" from="#27c6fa" to="#ff9d05" glow="0 4px 16px 6px rgba(0,0,0,.45)" arrow="#2cc8fb" t1="#f59b1e" t2="#2cc8fb" />
      <Badge x={907} id="reactB" from="#3448c4" to="#dc1b7c" glow="0 -6px 18px 2px rgba(52,72,196,.4), 0 8px 18px 2px rgba(220,27,124,.35)" arrow="#fa1164" t1="#e0197a" t2="#2d4cc8" />
    </Page>
  );
}
